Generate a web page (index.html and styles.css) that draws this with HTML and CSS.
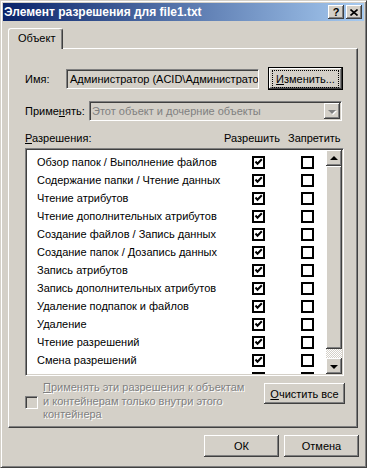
FILE: index.html
```html
<!DOCTYPE html>
<html>
<head>
    <meta charset="utf-8">
    <title>Элемент разрешения для file1.txt</title>
    <link rel="stylesheet" href="styles.css">
</head>
<body>
    <div class="window">
        <div class="titlebar">
            <span class="title">Элемент разрешения для file1.txt</span>
            <div class="title-btns">
                <span class="tbtn help">?</span>
                <span class="tbtn close">
                    <svg width="8" height="7" viewBox="0 0 8 7"><path d="M0.5 0.5 L7.5 6.5 M7.5 0.5 L0.5 6.5" stroke="#000" stroke-width="1.6" fill="none"/></svg>
                </span>
            </div>
        </div>

        <div class="tabs">
            <div class="tab">Объект</div>
        </div>

        <div class="panel">
            <div class="name-row">
                <span class="label">Имя:</span>
                <div class="field">Администратор (ACID\Администратор)</div>
                <button class="btn default"><span class="focus"><u>И</u>зменить...</span></button>
            </div>

            <div class="apply-row">
                <span class="label">Приме<u>н</u>ять:</span>
                <div class="combo">
                    <span class="combo-text">Этот объект и дочерние объекты</span>
                    <span class="combo-btn"><span class="arrow-down gray"></span></span>
                </div>
            </div>

            <div class="perm-head">
                <span><u>Р</u>азрешения:</span>
                <span>Разрешить</span>
                <span>Запретить</span>
            </div>

            <div class="perm-list">
                <div class="perm-rows" id="rows"></div>
                <div class="scrollbar">
                    <div class="sb-btn"><span class="arrow-up"></span></div>
                    <div class="sb-thumb"></div>
                    <div class="sb-track"></div>
                    <div class="sb-btn"><span class="arrow-down"></span></div>
                </div>
            </div>

            <div class="bottom-row">
                <span class="chk-disabled"></span>
                <div class="disabled-text"><u>П</u>рименять эти разрешения к объектам<br>и контейнерам только внутри этого<br>контейнера</div>
                <button class="btn clear-btn"><u>О</u>чистить все</button>
            </div>
        </div>

        <div class="dialog-btns">
            <button class="btn">ОК</button>
            <button class="btn">Отмена</button>
        </div>
    </div>

    <script>
        const perms = [
            'Обзор папок / Выполнение файлов',
            'Содержание папки / Чтение данных',
            'Чтение атрибутов',
            'Чтение дополнительных атрибутов',
            'Создание файлов / Запись данных',
            'Создание папок / Дозапись данных',
            'Запись атрибутов',
            'Запись дополнительных атрибутов',
            'Удаление подпапок и файлов',
            'Удаление',
            'Чтение разрешений',
            'Смена разрешений',
            'Смена владельца'
        ];
        const check = '<svg width="9" height="9" viewBox="0 0 9 9"><path d="M1.5 3.5 L3.5 5.8 L7.8 1.3" stroke="#000" stroke-width="2" fill="none"/></svg>';
        const rows = document.getElementById('rows');
        perms.forEach(name => {
            const row = document.createElement('div');
            row.className = 'perm-row';
            row.innerHTML = '<span>' + name + '</span>' +
                '<span class="chk">' + check + '</span>' +
                '<span class="chk"></span>';
            rows.appendChild(row);
        });
    </script>
</body>
</html>
```

FILE: styles.css
```css
body {
    margin: 0;
    background: #D4D0C8;
    font-family: "Liberation Sans", Arial, sans-serif;
    font-size: 11px;
    color: #000;
}
u {
    text-decoration: underline;
    text-underline-offset: 1px;
}
.window {
    width: 367px;
    height: 468px;
    box-sizing: border-box;
    background: #D4D0C8;
    border: 1px solid;
    border-color: #D4D0C8 #404040 #404040 #D4D0C8;
    box-shadow: inset 1px 1px #fff, inset -1px -1px #808080;
    padding: 2px;
}
.titlebar {
    height: 18px;
    display: flex;
    align-items: center;
    justify-content: space-between;
    padding: 0 2px 0 1px;
    background: linear-gradient(to right, #0A246A, #A6CAF0);
}
.title {
    color: #fff;
    font-weight: bold;
    font-size: 12px;
}
.title-btns {
    display: flex;
    gap: 2px;
}
.tbtn {
    width: 16px;
    height: 14px;
    box-sizing: border-box;
    display: flex;
    align-items: center;
    justify-content: center;
    background: #D4D0C8;
    box-shadow: inset -1px -1px #404040, inset 1px 1px #fff, inset -2px -2px #808080;
}
.tbtn.help {
    font-weight: bold;
    font-size: 11px;
    line-height: 14px;
}
.tabs {
    display: flex;
    margin: 7px 0 0 5px;
}
.tab {
    position: relative;
    z-index: 1;
    width: 55px;
    height: 21px;
    box-sizing: border-box;
    margin-bottom: -1px;
    padding: 3px 0 0 9px;
    background: #D4D0C8;
    border-top: 1px solid #fff;
    border-left: 1px solid #fff;
    border-right: 1px solid #404040;
    border-radius: 3px 3px 0 0;
    box-shadow: inset -1px 0 #808080;
}
.panel {
    width: 350px;
    height: 380px;
    box-sizing: border-box;
    margin-left: 5px;
    border: 1px solid;
    border-color: #fff #404040 #404040 #fff;
    box-shadow: inset -1px -1px #808080;
    padding: 18px 12px 0 16px;
}
.name-row {
    display: flex;
    align-items: center;
    height: 23px;
}
.label {
    flex: none;
}
.name-row .label {
    width: 41px;
}
.field {
    width: 193px;
    height: 20px;
    box-sizing: border-box;
    border: 1px solid;
    border-color: #808080 #fff #fff #808080;
    box-shadow: inset 1px 1px #404040;
    background: #D4D0C8;
    padding: 3px 0 0 3px;
    white-space: nowrap;
    overflow: hidden;
}
.btn {
    width: 75px;
    height: 23px;
    box-sizing: border-box;
    background: #D4D0C8;
    border: none;
    padding: 0;
    font-family: inherit;
    font-size: 11px;
    color: #000;
    box-shadow: inset -1px -1px #404040, inset 1px 1px #fff, inset -2px -2px #808080;
}
.btn.default {
    margin-left: 9px;
    border: 1px solid #000;
    display: flex;
    align-items: center;
    justify-content: center;
}
.focus {
    border: 1px dotted #000;
    padding: 2px 3px;
}
.apply-row {
    display: flex;
    align-items: center;
    margin-top: 11px;
    height: 20px;
}
.apply-row .label {
    width: 64px;
}
.combo {
    width: 253px;
    height: 20px;
    box-sizing: border-box;
    display: flex;
    align-items: center;
    justify-content: space-between;
    border: 1px solid;
    border-color: #808080 #fff #fff #808080;
    box-shadow: inset 1px 1px #404040;
    padding: 1px 1px 1px 2px;
}
.combo-text {
    color: #808080;
}
.combo-btn {
    width: 16px;
    height: 16px;
    box-sizing: border-box;
    display: flex;
    align-items: center;
    justify-content: center;
    background: #D4D0C8;
    box-shadow: inset -1px -1px #404040, inset 1px 1px #fff, inset -2px -2px #808080;
}
.arrow-down {
    width: 0;
    height: 0;
    border-left: 4px solid transparent;
    border-right: 4px solid transparent;
    border-top: 4px solid #000;
    margin-top: 1px;
}
.arrow-down.gray {
    border-top-color: #808080;
    filter: drop-shadow(1px 1px 0 #fff);
}
.arrow-up {
    width: 0;
    height: 0;
    border-left: 4px solid transparent;
    border-right: 4px solid transparent;
    border-bottom: 4px solid #000;
    margin-bottom: 1px;
}
.perm-head {
    display: grid;
    grid-template-columns: 199px 64px 1fr;
    margin-top: 10px;
    height: 14px;
    line-height: 14px;
}
.perm-list {
    display: flex;
    width: 319px;
    height: 228px;
    box-sizing: border-box;
    margin-top: 3px;
    background: #fff;
    border: 1px solid;
    border-color: #808080 #fff #fff #808080;
    box-shadow: inset 1px 1px #404040, inset -1px -1px #D4D0C8;
    padding: 1px;
    overflow: hidden;
}
.perm-rows {
    flex: 1;
    padding-top: 3px;
    overflow: hidden;
}
.perm-row {
    display: grid;
    grid-template-columns: 215px 49px 13px;
    align-items: center;
    height: 18px;
    padding-left: 10px;
    white-space: nowrap;
}
.chk {
    width: 13px;
    height: 13px;
    box-sizing: border-box;
    border: 2px solid #000;
    background: #fff;
    display: flex;
    align-items: center;
    justify-content: center;
}
.scrollbar {
    width: 16px;
    display: flex;
    flex-direction: column;
}
.sb-btn {
    height: 16px;
    display: flex;
    align-items: center;
    justify-content: center;
    background: #D4D0C8;
    box-shadow: inset -1px -1px #404040, inset 1px 1px #fff, inset -2px -2px #808080;
}
.sb-thumb {
    height: 183px;
    background: #D4D0C8;
    box-shadow: inset -1px -1px #404040, inset 1px 1px #fff, inset -2px -2px #808080;
}
.sb-track {
    flex: 1;
    background: repeating-conic-gradient(#fff 0 25%, #D4D0C8 0 50%);
    background-size: 2px 2px;
}
.bottom-row {
    display: flex;
    align-items: flex-start;
    margin-top: 5px;
}
.chk-disabled {
    flex: none;
    width: 13px;
    height: 13px;
    box-sizing: border-box;
    margin-top: 15px;
    border: 1px solid;
    border-color: #808080 #fff #fff #808080;
    box-shadow: inset 1px 1px #404040;
    background: #D4D0C8;
}
.disabled-text {
    width: 212px;
    margin-left: 5px;
    line-height: 13.5px;
    color: #808080;
    text-shadow: 1px 1px 0 #fff;
}
.clear-btn {
    width: 81px;
    height: 21px;
    margin: 2px 0 0 auto;
}
.dialog-btns {
    display: flex;
    justify-content: flex-end;
    gap: 5px;
    margin-top: 7px;
    padding-right: 5px;
}
.dialog-btns .btn {
    height: 22px;
}
```
